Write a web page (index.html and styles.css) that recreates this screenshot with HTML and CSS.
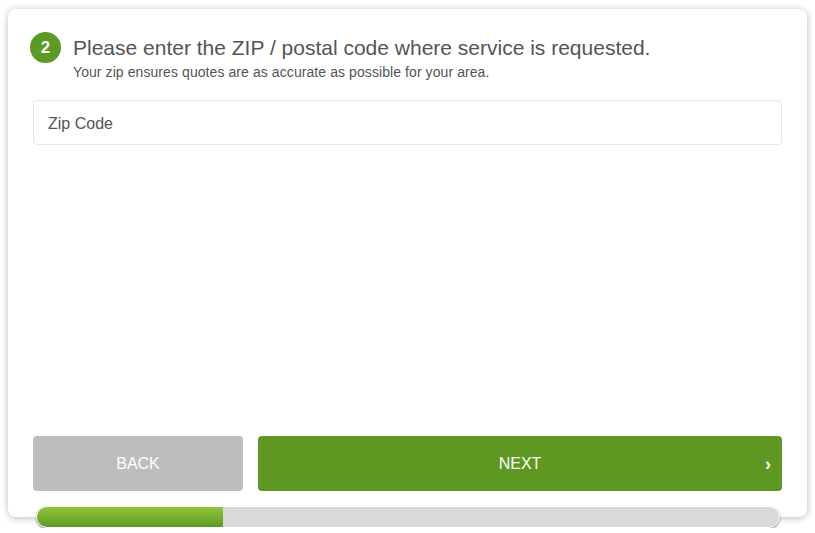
FILE: index.html
```html
<!DOCTYPE html>
<html lang="en">
<head>
<meta charset="utf-8">
<title>Zip Code</title>
<link rel="stylesheet" href="styles.css">
</head>
<body>
<div class="wrap">
  <div class="card">
    <div class="header">
      <div class="step">2</div>
      <div class="texts">
        <div class="title">Please enter the ZIP / postal code where service is requested.</div>
        <div class="subtitle">Your zip ensures quotes are as accurate as possible for your area.</div>
      </div>
    </div>
    <input class="zip" type="text" placeholder="Zip Code">
    <div class="actions">
      <button class="btn back">BACK</button>
      <button class="btn next">NEXT<span class="chev">›</span></button>
    </div>
  </div>
  <div class="progress"><div class="fill" style="width:25%"></div></div>
</div>
</body>
</html>
```
FILE: styles.css
```css
* { box-sizing: border-box; }
html, body { margin: 0; background: #fff; }
body {
  font-family: "Liberation Sans", Arial, sans-serif;
  color: #555;
  padding: 9px 8px 0 8px;
}
.wrap { width: 799px; display: flex; flex-direction: column; }
.card {
  height: 508px;
  background: #fff;
  border-radius: 8px;
  box-shadow: 0 1px 7px rgba(0,0,0,0.28);
  padding: 23px 25px 26px 25px;
  display: flex;
  flex-direction: column;
}
.header { display: flex; align-items: flex-start; gap: 12px; margin-left: -3px; }
.step {
  width: 31px; height: 31px; flex: none;
  border-radius: 50%;
  background: #5b9a24;
  color: #fff;
  font-weight: bold;
  font-size: 17px;
  display: flex; align-items: center; justify-content: center;
}
.texts { margin-top: 4px; }
.title { font-size: 21px; line-height: 24px; color: #555; }
.subtitle { font-size: 14px; line-height: 16px; margin-top: 4px; color: #555; letter-spacing: 0.08px; }
.zip {
  margin-top: 20px;
  height: 45px;
  width: 100%;
  border: 1px solid #e6e6e6;
  border-radius: 4px;
  padding: 3px 14px 0;
  font-family: inherit;
  font-size: 16px;
  color: #555;
  outline: none;
}
.zip::placeholder { color: #555; opacity: 1; }
.actions { margin-top: auto; display: flex; gap: 15px; }
.btn {
  height: 55px;
  border: none;
  border-radius: 4px;
  color: #fff;
  font-family: inherit;
  font-size: 16px;
  padding: 0;
}
.back { width: 210px; background: #bdbdbd; }
.next { flex: 1; background: #5e9822; position: relative; }
.chev {
  position: absolute;
  right: 11px;
  top: 18px;
  font-weight: bold;
  font-size: 18px;
}
.progress {
  margin: -11px 0 0 28px;
  width: 744px;
  height: 22px;
  border-radius: 11px;
  background: #d9d9d9;
  border: 1px solid #fff;
  box-shadow: 0 1px 2px rgba(0,0,0,0.45);
  overflow: hidden;
  position: relative;
}
.fill {
  height: 100%;
  background: linear-gradient(to bottom, #93c43a, #5e9a22);
}
```
